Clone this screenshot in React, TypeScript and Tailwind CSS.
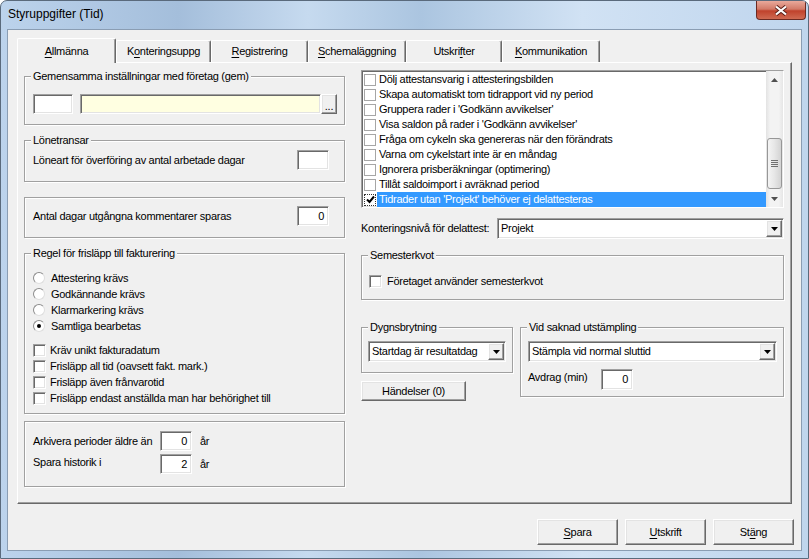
import React from "react";

const sunken =
  "border border-t-[#a0a0a0] border-l-[#a0a0a0] border-r-white border-b-white shadow-[inset_1px_1px_0_#696969,inset_-1px_-1px_0_#e3e3e3]";
const raised =
  "border border-t-white border-l-white border-r-[#696969] border-b-[#696969] shadow-[inset_-1px_-1px_0_#a0a0a0,inset_1px_1px_0_#e3e3e3] bg-[#f0f0f0]";

const tabs = [
  { pre: "", u: "A", post: "llmänna", w: "w-[99px]", active: true },
  { pre: "K", u: "o", post: "nteringsuppg", w: "w-[95px]" },
  { pre: "", u: "R", post: "egistrering", w: "w-[97px]" },
  { pre: "", u: "S", post: "chemaläggning", w: "w-[98px]" },
  { pre: "Utskri", u: "f", post: "ter", w: "w-[96px]" },
  { pre: "", u: "K", post: "ommunikation", w: "w-[98px]" },
];

const listItems = [
  "Dölj attestansvarig i attesteringsbilden",
  "Skapa automatiskt tom tidrapport vid ny period",
  "Gruppera rader i 'Godkänn avvikelser'",
  "Visa saldon på rader i 'Godkänn avvikelser'",
  "Fråga om cykeln ska genereras när den förändrats",
  "Varna om cykelstart inte är en måndag",
  "Ignorera prisberäkningar (optimering)",
  "Tillåt saldoimport i avräknad period",
];

const Group = ({
  label,
  className,
  children,
}: {
  label?: string;
  className: string;
  children?: React.ReactNode;
}) => (
  <div
    className={`relative border border-[#a0a0a0] shadow-[1px_1px_0_#fff,inset_1px_1px_0_#fff] ${className}`}
  >
    {label && (
      <span className="absolute -top-[7px] left-[6px] px-[2px] bg-[#f0f0f0] leading-[13px] whitespace-nowrap">
        {label}
      </span>
    )}
    {children}
  </div>
);

const Arrow = () => (
  <svg width="7" height="4" viewBox="0 0 7 4">
    <polygon points="0,0 7,0 3.5,4" fill="#000" />
  </svg>
);

const Combo = ({ value, w }: { value: string; w: string }) => (
  <div className={`${sunken} ${w} h-[21px] bg-white flex items-center`}>
    <span className="pl-[3px] flex-1 whitespace-nowrap">{value}</span>
    <div className={`${raised} w-[16px] h-[17px] mr-[1px] flex items-center justify-center`}>
      <Arrow />
    </div>
  </div>
);

const NumBox = ({ value = "", h = "h-[20px]" }: { value?: string; h?: string }) => (
  <div className={`${sunken} w-[32px] ${h} bg-white flex items-center justify-end pr-[4px]`}>
    {value}
  </div>
);

const Check = () => (
  <div className={`${sunken} w-[13px] h-[13px] bg-white`} />
);

const Radio = ({ checked }: { checked?: boolean }) => (
  <div className="w-[12px] h-[12px] rounded-full border border-t-[#8c8c8c] border-l-[#8c8c8c] border-r-[#dedede] border-b-[#dedede] bg-white flex items-center justify-center">
    {checked && <div className="w-[4px] h-[4px] rounded-full bg-black" />}
  </div>
);

const Btn = ({ children, className }: { children: React.ReactNode; className: string }) => (
  <div className={`${raised} ${className} flex items-center justify-center`}>{children}</div>
);

export default function App() {
  return (
    <div className="w-[809px] h-[559px] overflow-hidden rounded-t-[7px] border border-[#5a6a7c] bg-[linear-gradient(90deg,#bcd3ec_0%,#a4bedb_22%,#c6daef_38%,#abc5e0_52%,#d1e2f4_72%,#bfd5ed_100%)] font-['Liberation_Sans',Arial,sans-serif] text-[11px] leading-[13px] tracking-[-0.28px] text-black">
      {/* title bar */}
      <div className="h-[28px] flex items-start">
        <span className="pl-[7px] pt-[7px] text-[12px] tracking-normal">Styruppgifter (Tid)</span>
        <div className="ml-auto mr-[2px] w-[50px] h-[19px] rounded-b-[4px] border border-t-0 border-[#6b2a22] bg-[linear-gradient(180deg,#e9a99b_0%,#d27a68_45%,#c0422c_55%,#cf6a52_100%)] flex items-center justify-center">
          <svg width="14" height="11" viewBox="0 0 14 11">
            <path d="M2 1.5 L12 9.5 M12 1.5 L2 9.5" stroke="#5b2019" strokeWidth="4" />
            <path d="M2 1.5 L12 9.5 M12 1.5 L2 9.5" stroke="#fff" strokeWidth="2.2" />
          </svg>
        </div>
      </div>

      {/* client area */}
      <div className="mx-[6px] h-[522px] border border-[#8a9db3] bg-[#f0f0f0] flex flex-col">
        {/* tabs */}
        <div className="pl-[9px] pt-[8px] flex items-end h-[32px]">
          {tabs.map((t, i) => (
            <div
              key={i}
              className={`${t.w} ${
                t.active ? "h-[25px] -mb-[1px] relative z-10" : "h-[22px]"
              } bg-[#f0f0f0] border-t border-l border-white border-r border-r-[#696969] rounded-t-[2px] shadow-[inset_-1px_0_0_#a0a0a0] flex items-center justify-center whitespace-nowrap`}
            >
              {t.pre}
              <span className="underline underline-offset-[2px]">{t.u}</span>
              {t.post}
            </div>
          ))}
        </div>

        {/* tab page */}
        <div className="ml-[9px] w-[775px] h-[442px] border border-t-white border-l-white border-r-[#696969] border-b-[#696969] shadow-[inset_-1px_-1px_0_#a0a0a0] flex items-start">
          {/* left column */}
          <div className="ml-[6px] w-[321px] flex flex-col">
            <Group label="Gemensamma inställningar med företag (gem)" className="mt-[13px] h-[49px]">
              <div className="pt-[17px] pl-[8px] flex">
                <div className={`${sunken} w-[40px] h-[20px] bg-white`} />
                <div className={`${sunken} ml-[7px] w-[241px] h-[20px] bg-[#ffffe1]`} />
                <div className={`${raised} w-[16px] h-[20px] flex items-end justify-center pb-[4px] leading-[6px]`}>...</div>
              </div>
            </Group>

            <Group label="Lönetransar" className="mt-[15px] h-[42px]">
              <div className="pt-[9px] pl-[8px] pr-[15px] flex items-center justify-between">
                <span>Löneart för överföring av antal arbetade dagar</span>
                <NumBox />
              </div>
            </Group>

            <Group className="mt-[15px] h-[41px]">
              <div className="pt-[8px] pl-[8px] pr-[15px] flex items-center justify-between">
                <span>Antal dagar utgångna kommentarer sparas</span>
                <NumBox value="0" />
              </div>
            </Group>

            <Group label="Regel för frisläpp till fakturering" className="mt-[15px] h-[161px]">
              <div className="pt-[16px] pl-[8px] flex flex-col">
                {["Attestering krävs", "Godkännande krävs", "Klarmarkering krävs", "Samtliga bearbetas"].map(
                  (r, i) => (
                    <div key={r} className="h-[16px] flex items-center">
                      <Radio checked={i === 3} />
                      <span className="ml-[6px]">{r}</span>
                    </div>
                  )
                )}
                <div className="h-[8px]" />
                {[
                  "Kräv unikt fakturadatum",
                  "Frisläpp all tid (oavsett fakt. mark.)",
                  "Frisläpp även frånvarotid",
                  "Frisläpp endast anställda man har behörighet till",
                ].map((c) => (
                  <div key={c} className="h-[16px] flex items-center">
                    <Check />
                    <span className="ml-[4px]">{c}</span>
                  </div>
                ))}
              </div>
            </Group>

            <Group className="mt-[7px] h-[66px]">
              <div className="pt-[9px] pl-[8px] flex flex-col gap-[3px]">
                <div className="flex items-center">
                  <span className="w-[127px]">Arkivera perioder äldre än</span>
                  <NumBox value="0" />
                  <span className="ml-[8px]">år</span>
                </div>
                <div className="flex items-center">
                  <span className="w-[127px] -mt-[3px]">Spara historik i</span>
                  <NumBox value="2" />
                  <span className="ml-[8px]">år</span>
                </div>
              </div>
            </Group>
          </div>

          {/* right column */}
          <div className="ml-[16px] w-[423px] flex flex-col">
            {/* list box */}
            <div className={`${sunken} mt-[7px] h-[138px] bg-white flex overflow-hidden`}>
              <div className="flex-1 pt-[1px] flex flex-col">
                {listItems.map((t) => (
                  <div key={t} className="h-[15px] flex items-center shrink-0">
                    <div className="ml-[2px] w-[12px] h-[12px] border border-[#a6a6a6] bg-white" />
                    <span className="ml-[3px] whitespace-nowrap">{t}</span>
                  </div>
                ))}
                <div className="h-[15px] flex items-center shrink-0">
                  <div className="ml-[2px] w-[12px] h-[12px] border border-dotted border-[#333] bg-white flex items-center justify-center">
                    <svg width="9" height="9" viewBox="0 0 9 9">
                      <path d="M1 4.5 L3.5 7 L8 1.5" stroke="#000" strokeWidth="2" fill="none" />
                    </svg>
                  </div>
                  <span className="ml-[1px] h-[15px] flex-1 bg-[#3399ff] text-white pl-[2px] flex items-center whitespace-nowrap">
                    Tidrader utan 'Projekt' behöver ej delattesteras
                  </span>
                </div>
              </div>
              {/* scrollbar */}
              <div className="w-[17px] h-full flex flex-col items-center bg-[linear-gradient(90deg,#e3e3e3,#f3f3f3_25%,#f3f3f3_75%,#e6e6e6)]">
                <div className="h-[17px] flex items-center justify-center">
                  <svg width="7" height="4" viewBox="0 0 7 4">
                    <polygon points="0,4 7,4 3.5,0" fill="#505050" />
                  </svg>
                </div>
                <div className="flex-1">
                  <div className="mt-[50px] w-[15px] h-[51px] rounded-[3px] border border-[#979797] bg-[linear-gradient(90deg,#f4f4f4,#e6e6e6_50%,#d3d3d3)] flex flex-col items-center justify-center gap-[1px]">
                    {[0, 1, 2, 3].map((i) => (
                      <div key={i} className="w-[7px] h-[1px] bg-[#6f6f6f]" />
                    ))}
                  </div>
                </div>
                <div className="h-[17px] flex items-center justify-center">
                  <svg width="7" height="4" viewBox="0 0 7 4">
                    <polygon points="0,0 7,0 3.5,4" fill="#505050" />
                  </svg>
                </div>
              </div>
            </div>

            <div className="mt-[10px] flex items-center">
              <span>Konteringsnivå för delattest:</span>
              <div className="ml-auto">
                <Combo value="Projekt" w="w-[287px]" />
              </div>
            </div>

            <Group label="Semesterkvot" className="mt-[16px] h-[45px]">
              <div className="pt-[19px] pl-[7px] flex items-center">
                <Check />
                <span className="ml-[5px]">Företaget använder semesterkvot</span>
              </div>
            </Group>

            <div className="mt-[27px] flex items-start">
              <div className="w-[152px] flex flex-col">
                <Group label="Dygnsbrytning" className="h-[46px]">
                  <div className="pt-[13px] pl-[6px]">
                    <Combo value="Startdag är resultatdag" w="w-[138px]" />
                  </div>
                </Group>
                <Btn className="mt-[8px] w-[105px] h-[20px]">Händelser (0)</Btn>
              </div>
              <Group label="Vid saknad utstämpling" className="ml-[7px] flex-1 h-[70px]">
                <div className="pt-[13px] pl-[7px] flex flex-col">
                  <Combo value="Stämpla vid normal sluttid" w="w-[249px]" />
                  <div className="mt-[7px] flex items-center">
                    <span className="w-[73px] -mt-[4px]">Avdrag (min)</span>
                    <NumBox value="0" h="h-[21px]" />
                  </div>
                </div>
              </Group>
            </div>
          </div>
        </div>

        {/* bottom buttons */}
        <div className="mt-[15px] pr-[7px] flex justify-end gap-[7px]">
          <Btn className="w-[81px] h-[26px]">
            <span className="underline underline-offset-[2px]">S</span>para
          </Btn>
          <Btn className="w-[81px] h-[26px]">
            <span className="underline underline-offset-[2px]">U</span>tskrift
          </Btn>
          <Btn className="w-[81px] h-[26px]">
            St<span className="underline underline-offset-[2px]">ä</span>ng
          </Btn>
        </div>
      </div>
    </div>
  );
}
